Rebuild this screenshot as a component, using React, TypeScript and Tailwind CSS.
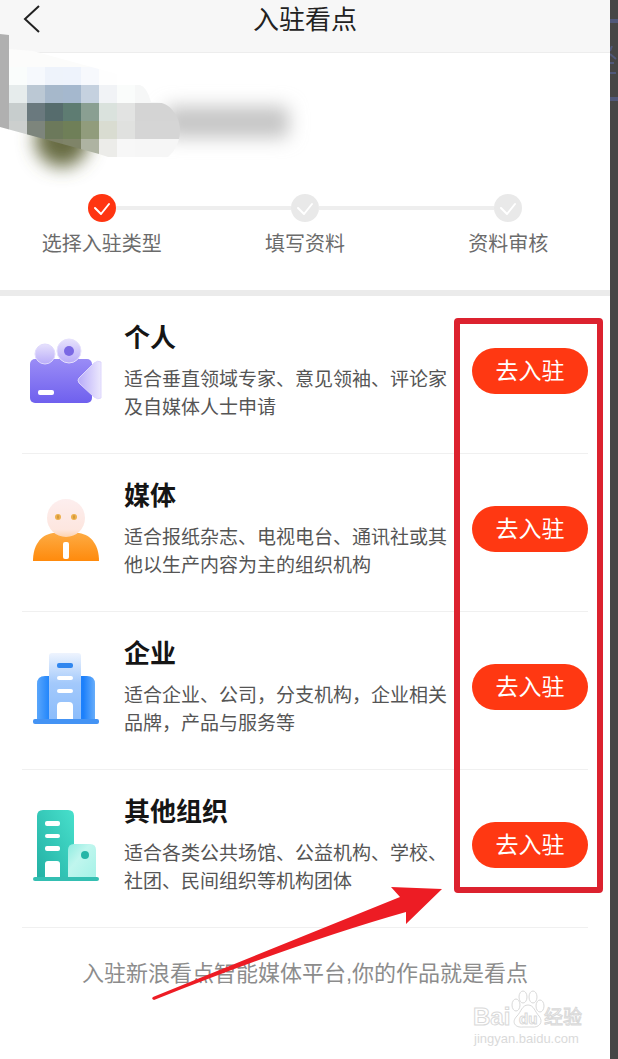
import type { ReactNode } from "react"

const mosaic = [
  ["#fafdfc", "#f6f9fd", "#eef3fb", "#eef3fc", "#f7f9fd", "#fefefe", "#ffffff", "#ffffff"],
  ["#e6ecec", "#bbc8d4", "#a6b8cb", "#a5b8ce", "#c5d1df", "#f1f3f6", "#fafcfb", "#f6f7f7"],
  ["#c7cdcd", "#6a797e", "#566c6d", "#5e7c72", "#8a9f92", "#dae2dd", "#e2e3e2", "#d4d4d4"],
  ["#cccfce", "#7d857c", "#6c795b", "#6f7f58", "#919c7c", "#d9dcd1", "#e0e1df", "#d5d5d5"],
  ["#7d8167", "#7d8167", "#7d8167", "#7f8468", "#aeb3a2", "#ecece9", "#f7f7f7", "#f6f6f6"],
]

function HiddenProfile() {
  return (
    <svg className="pointer-events-none absolute -top-[21px] left-0 h-[160px] w-[320px]" viewBox="0 32 320 160" aria-hidden="true">
      <defs>
        <filter id="soft" x="-50%" y="-100%" width="200%" height="300%">
          <feGaussianBlur stdDeviation="9" />
        </filter>
        <clipPath id="brush">
          <path d="M0 34L9 35V49L33 51L117 74L133 85H140Q147 87 151 102H157C170 103 180 116 180 130C180 142 175 151 168 157H108L99 154L0 127Z" />
        </clipPath>
      </defs>
      <rect x="165" y="106" width="124" height="32" rx="6" fill="#c6c6c6" filter="url(#soft)" />
      <circle cx="62" cy="140" r="27" fill="#686c43" filter="url(#soft)" />
      <g clipPath="url(#brush)">
        <rect x="9" y="34" width="171" height="33" fill="#fcfcfb" />
        <rect x="0" y="34" width="9" height="100" fill="#b0b0b0" />
        {mosaic.map((row, y) =>
          row.map((fill, x) => (
            <rect
              key={`${x}-${y}`}
              x={9 + x * 18}
              y={67 + y * 18}
              width={x === 7 ? 45 : 18}
              height="18"
              fill={fill}
              shapeRendering="crispEdges"
            />
          ))
        )}
      </g>
    </svg>
  )
}

function CameraIcon() {
  return (
    <>
      <defs>
        <linearGradient id="cam" x1="0" y1="0" x2="0" y2="1">
          <stop offset="0" stopColor="#9a8cf6" />
          <stop offset="1" stopColor="#6f60ee" />
        </linearGradient>
        <linearGradient id="camLens" x1="0" y1="0" x2="1" y2="0">
          <stop offset="0" stopColor="#b7abf9" />
          <stop offset="1" stopColor="#ece8fd" />
        </linearGradient>
        <linearGradient id="camReel" x1="0" y1="0" x2="0" y2="1">
          <stop offset="0" stopColor="#e6e1fc" />
          <stop offset="1" stopColor="#b9acf9" />
        </linearGradient>
      </defs>
      <rect x="1" y="23" width="62" height="44" rx="5" fill="url(#cam)" />
      <circle cx="16" cy="18" r="10" fill="url(#camReel)" stroke="#e0dafc" />
      <circle cx="40" cy="15" r="12" fill="url(#camReel)" stroke="#e6e1fc" />
      <circle cx="40" cy="15" r="5" fill="#7a68e4" />
      <path d="M50 42Q48 44 50 47L65 61Q69 64 72 62V26Q69 24 65 27Z" fill="url(#camLens)" stroke="#ddd6fd" />
      <rect x="9" y="54" width="16" height="5" rx="2" fill="#fff" />
    </>
  )
}

function PersonIcon() {
  return (
    <>
      <defs>
        <linearGradient id="body" x1="0" y1="0" x2="0" y2="1">
          <stop offset="0" stopColor="#fdab43" />
          <stop offset="1" stopColor="#ff8a0c" />
        </linearGradient>
        <linearGradient id="face" x1="0" y1="0" x2="0" y2="1">
          <stop offset="0" stopColor="#fdeeee" />
          <stop offset="0.8" stopColor="#fde6df" />
          <stop offset="1" stopColor="#fdd3ae" />
        </linearGradient>
      </defs>
      <path d="M4 67C4 52 11 41 24 39H50C63 41 70 52 70 67Z" fill="url(#body)" />
      <circle cx="37" cy="24" r="19" fill="url(#face)" />
      <ellipse cx="29" cy="23" rx="3" ry="3" fill="#eeb04e" />
      <ellipse cx="45" cy="23" rx="3" ry="3" fill="#eeb04e" />
      <ellipse cx="29" cy="23" rx="1" ry="2" fill="#d0983a" />
      <ellipse cx="45" cy="23" rx="1" ry="2" fill="#d0983a" />
      <rect x="34" y="48" width="6" height="17" rx="2" fill="#fff" />
    </>
  )
}

function OfficeIcon() {
  return (
    <>
      <defs>
        <linearGradient id="wing" x1="0" y1="0" x2="1" y2="0">
          <stop offset="0" stopColor="#5aa6fb" />
          <stop offset="0.2" stopColor="#2487fb" />
          <stop offset="0.8" stopColor="#1c80fb" />
          <stop offset="1" stopColor="#67adfa" />
        </linearGradient>
        <linearGradient id="tower" x1="0" y1="0" x2="0" y2="1">
          <stop offset="0" stopColor="#eef4fe" />
          <stop offset="0.45" stopColor="#a3c9fb" />
          <stop offset="1" stopColor="#8bbcfb" />
        </linearGradient>
      </defs>
      <path d="M8 68V32Q8 24 16 24H58Q66 24 66 32V68Z" fill="url(#wing)" />
      <path d="M20 68V4Q20 1 23 1H49Q52 1 52 4V68Z" fill="url(#tower)" />
      <rect x="28" y="11" width="16" height="5" rx="2" fill="#3187ef" />
      <rect x="28" y="24" width="16" height="4" rx="2" fill="#fff" />
      <rect x="28" y="37" width="16" height="4" rx="2" fill="#fff" />
      <path d="M28 67V54Q28 50 32 50H40Q44 50 44 54V67Z" fill="#fff" />
      <rect x="4" y="67" width="66" height="5" rx="2" fill="#4493f4" />
    </>
  )
}

function OrganizationIcon() {
  return (
    <>
      <defs>
        <linearGradient id="block" x1="1" y1="0" x2="0" y2="1">
          <stop offset="0" stopColor="#48e0cc" />
          <stop offset="1" stopColor="#23b0a4" />
        </linearGradient>
        <linearGradient id="annex" x1="0" y1="0" x2="1" y2="1">
          <stop offset="0" stopColor="#8fece0" />
          <stop offset="0.4" stopColor="#c0f6ee" />
          <stop offset="1" stopColor="#a5f2e7" />
        </linearGradient>
      </defs>
      <path d="M8 68V6Q8 0 14 0H39Q45 0 45 6V68Z" fill="url(#block)" />
      <path d="M39 68V40Q39 34 45 34H61Q67 34 67 40V68Z" fill="url(#annex)" />
      <circle cx="56" cy="45" r="4" fill="#27b5a7" />
      <rect x="16" y="11" width="15" height="5" rx="2" fill="#fff" />
      <rect x="16" y="24" width="15" height="4" rx="2" fill="#fff" />
      <rect x="16" y="36" width="15" height="5" rx="2" fill="#fff" />
      <path d="M16 67V54Q16 51 19 51H28Q31 51 31 54V67Z" fill="#fff" />
      <rect x="4" y="67" width="66" height="4" rx="2" fill="#34bfb2" />
    </>
  )
}

const steps = [
  { label: "选择入驻类型", done: true },
  { label: "填写资料", done: false },
  { label: "资料审核", done: false },
]

const types: { title: string; desc: string; icon: ReactNode }[] = [
  { title: "个人", desc: "适合垂直领域专家、意见领袖、评论家及自媒体人士申请", icon: <CameraIcon /> },
  { title: "媒体", desc: "适合报纸杂志、电视电台、通讯社或其他以生产内容为主的组织机构", icon: <PersonIcon /> },
  { title: "企业", desc: "适合企业、公司，分支机构，企业相关品牌，产品与服务等", icon: <OfficeIcon /> },
  { title: "其他组织", desc: "适合各类公共场馆、公益机构、学校、社团、民间组织等机构团体", icon: <OrganizationIcon /> },
]

function Steps() {
  return (
    <ol className="grid grid-cols-3 pb-8">
      {steps.map((step, i) => (
        <li key={step.label} className="flex flex-col items-center gap-2">
          <div className="flex w-full items-center">
            <span className={`h-1 flex-1 ${i > 0 ? "bg-[#eeeeee]" : ""}`} />
            <svg className="size-7" viewBox="0 0 28 28" aria-hidden="true">
              <circle cx="14" cy="14" r="14" fill={step.done ? "#ff3511" : "#e9e9e9"} />
              <path d="M7 14L13 20L21 10" fill="none" stroke="#fff" strokeWidth="2" strokeLinecap="round" strokeLinejoin="round" />
            </svg>
            <span className={`h-1 flex-1 ${i < steps.length - 1 ? "bg-[#eeeeee]" : ""}`} />
          </div>
          <span className="text-[20px] leading-7 text-[#6b6b6b]">{step.label}</span>
        </li>
      ))}
    </ol>
  )
}

function Watermark() {
  return (
    <svg className="pointer-events-none absolute right-6 bottom-3 h-[58px] w-[114px]" viewBox="472 989 114 58" role="img" aria-label="Baidu 经验">
      <g fill="#fff" stroke="#d9d9d9" strokeWidth="1">
        <text x="473" y="1025" className="font-['Liberation_Sans'] text-[24px] font-bold">Bai</text>
        <ellipse cx="516" cy="1005" rx="4" ry="6" />
        <ellipse cx="523" cy="997" rx="4" ry="6" />
        <ellipse cx="533" cy="997" rx="4" ry="6" />
        <ellipse cx="540" cy="1006" rx="4" ry="6" />
        <path d="M528 1005C534 1005 535 1012 539 1016C544 1022 539 1028 532 1027H523C515 1028 511 1022 517 1016C521 1012 522 1005 528 1005Z" />
        <text x="519" y="1024" className="font-['Liberation_Sans'] text-[15px] font-bold">du</text>
        <text x="544" y="1024" className="font-['Noto_Sans_CJK_SC'] text-[19px]">经验</text>
      </g>
      <text x="474" y="1043" fill="#dadada" className="font-['Liberation_Sans'] text-[13px]">jingyan.baidu.com</text>
    </svg>
  )
}

export default function App() {
  return (
    <div className="flex min-h-screen bg-white font-['Liberation_Sans','Noto_Sans_CJK_SC',sans-serif]">
      <main className="relative min-w-0 flex-1">
        <header className="grid h-[53px] grid-cols-[1fr_auto_1fr] items-start border-b border-[#ededed] bg-[#f7f7f7] pt-1">
          <button type="button" aria-label="返回" className="ml-5 w-6">
            <svg className="h-8 w-6" viewBox="0 0 24 32" fill="none" stroke="#222" strokeWidth="2">
              <path d="M19 2L5 15L19 28" />
            </svg>
          </button>
          <h1 className="text-[26px] leading-8 text-[#222]">入驻看点</h1>
        </header>

        <section className="relative h-[141px]">
          <HiddenProfile />
        </section>

        <Steps />
        <div className="h-[6px] bg-[#ebebeb]" />

        <section className="relative">
          <ul className="px-[22px]">
            {types.map((type) => (
              <li key={type.title} className="flex h-[158px] items-start gap-[21px] border-b border-[#f0f0f0] pl-[7px]">
                <svg className="mt-10 h-[74px] w-[74px] shrink-0" viewBox="0 0 74 74" aria-hidden="true">
                  {type.icon}
                </svg>
                <div className="min-w-0 flex-1 pt-[26px]">
                  <h2 className="text-[26px] leading-8 font-bold text-[#151515]">{type.title}</h2>
                  <p className="mt-3 text-[19px] leading-7 text-[#555]">{type.desc}</p>
                </div>
                <button
                  type="button"
                  aria-label={`${type.title} 去入驻`}
                  className="mt-[52px] h-[46px] w-[116px] shrink-0 rounded-full bg-[#ff3812] text-[23px] text-white"
                >
                  去入驻
                </button>
              </li>
            ))}
          </ul>
          <div className="pointer-events-none absolute top-[22px] right-[7px] bottom-[35px] w-[149px] rounded-sm border-[6px] border-[#dc222f]" />
          <svg className="pointer-events-none absolute -bottom-[74px] left-[150px] h-[118px] w-[294px]" viewBox="150 884 294 118" aria-hidden="true">
            <path d="M153 997L400 897L391 887L442 889L406 924V912Q300 942 154 1000Q151 999 153 997Z" fill="#ed1c24" />
          </svg>
        </section>

        <p className="pt-[30px] pb-[69px] text-center text-[22px] leading-8 text-[#8c8c8c]">
          入驻新浪看点智能媒体平台,你的作品就是看点
        </p>
        <Watermark />
      </main>

      <aside className="w-2 shrink-0 bg-[#464646]" aria-hidden="true">
        <svg className="h-[110px] w-2" viewBox="0 0 8 110" fill="none" stroke="#505879">
          <path d="M0 21H8M0 99H8" strokeWidth="4" />
          <path d="M2 46L0 51M0 54L6 59M0 63H4M0 73H6" strokeWidth="2" />
        </svg>
      </aside>
    </div>
  )
}
